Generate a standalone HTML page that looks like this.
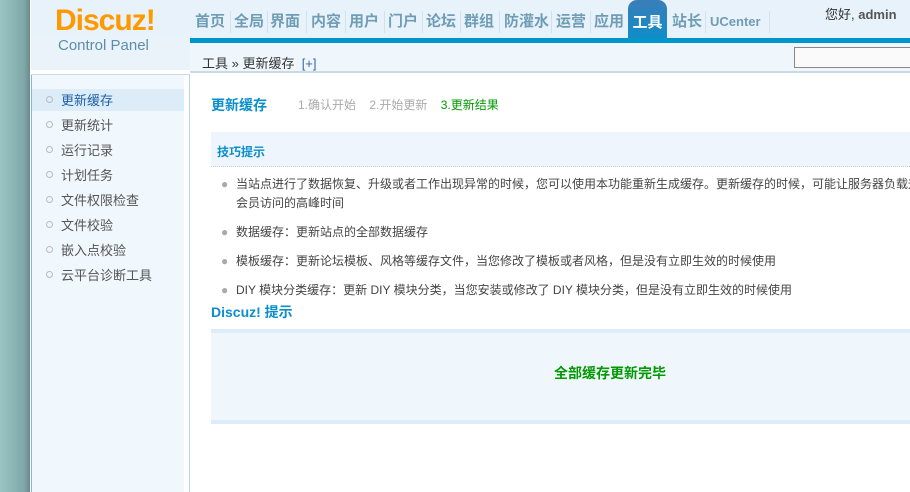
<!DOCTYPE html>
<html><head><meta charset="utf-8">
<style>
*{margin:0;padding:0;box-sizing:border-box}
body{width:910px;height:492px;overflow:hidden;position:relative;background:#fff;font-family:"Liberation Sans","Noto Sans CJK SC",sans-serif;font-size:12px;color:#333}
.a{position:absolute}
.desk{left:0;top:0;width:30px;height:492px;background:linear-gradient(90deg,#9cc4c4,#7fa8a8 80%,#6a8a8a)}
.hdr{left:31px;top:0;width:879px;height:38px;background:#e8f2fa}
.logo{left:55px;top:4px;font:bold 30px "Liberation Sans",sans-serif;color:#ff9900;letter-spacing:-1px}
.cp{left:58px;top:37px;font-size:15px;color:#5b8fa8}
.bar{left:190px;top:38px;width:720px;height:5px;background:#0096cc}
.bc{left:190px;top:43px;width:720px;height:30px;background:#f0f7fc;border-bottom:2px solid #c9dbe6}
.n{position:absolute;top:11px;font-weight:bold;font-size:15px;color:#6f9db5;white-space:nowrap;line-height:22px}
.d{position:absolute;top:11px;width:1px;height:22px;background:#d0e2ee}
.tab{left:628px;top:0;width:39px;height:43px;background:linear-gradient(#3a7db8,#0a8fcb);border-radius:9px 9px 0 0;color:#fff;font-weight:bold;font-size:15px;text-align:center;padding-top:11px}
.side{left:31px;top:38px;width:153px;height:454px;background:#f0f7fd;border-left:1px solid #8ab4d8}
.sep{left:184px;top:75px;width:6px;height:417px;background:#fff;border-right:1px solid #b8d4e2}
.si{left:46px;font-size:13px;color:#555;height:22px;line-height:22px}
.si i{display:inline-block;width:7px;height:7px;border:1px solid #bbb;border-radius:50%;margin-right:8px;vertical-align:2px}
</style></head><body>
<div class="a desk"></div>
<div class="a side"></div>
<div class="a hdr"></div>
<div class="a" style="left:31px;top:38px;width:159px;height:32px;background:#eaf3fa"></div>
<div class="a" style="left:31px;top:70px;width:159px;height:5px;background:#fff;border-bottom:1px solid #c9dbe6"></div>
<div class="a logo">Discuz!</div>
<div class="a cp">Control Panel</div>
<div class="n" style="left:195px">首页</div><div class="d" style="left:230px"></div>
<div class="n" style="left:234px">全局</div><div class="d" style="left:267px"></div>
<div class="n" style="left:270px">界面</div><div class="d" style="left:306px"></div>
<div class="n" style="left:311px">内容</div><div class="d" style="left:345px"></div>
<div class="n" style="left:349px">用户</div><div class="d" style="left:384px"></div>
<div class="n" style="left:388px">门户</div><div class="d" style="left:422px"></div>
<div class="n" style="left:426px">论坛</div><div class="d" style="left:460px"></div>
<div class="n" style="left:464px">群组</div><div class="d" style="left:499px"></div>
<div class="n" style="left:504px">防灌水</div><div class="d" style="left:551px"></div>
<div class="n" style="left:556px">运营</div><div class="d" style="left:590px"></div>
<div class="n" style="left:594px">应用</div>
<div class="n" style="left:672px">站长</div><div class="d" style="left:705px"></div>
<div class="n" style="left:710px;font-size:13px">UCenter</div><div class="d" style="left:769px"></div>
<div class="a tab">工具</div>
<div class="a" style="left:825px;top:4px;font-size:13px;color:#333">您好, <b style="color:#555">admin</b></div>
<div class="a bar"></div>
<div class="a bc"></div>
<div class="a" style="left:202px;top:53px;font-size:13px;color:#333">工具 » 更新缓存 &nbsp;<span style="color:#3366aa">[+]</span></div>
<div class="a" style="left:794px;top:47px;width:120px;height:21px;border:1px solid #888;border-right:0;background:#fafafa"></div>
<div class="a" style="left:32px;top:89px;width:152px;height:22px;background:#dcecf8"></div>
<div class="a si" style="top:90px;color:#1f5fa6"><i></i>更新缓存</div>
<div class="a si" style="top:115px"><i></i>更新统计</div>
<div class="a si" style="top:140px"><i></i>运行记录</div>
<div class="a si" style="top:165px"><i></i>计划任务</div>
<div class="a si" style="top:190px"><i></i>文件权限检查</div>
<div class="a si" style="top:215px"><i></i>文件校验</div>
<div class="a si" style="top:240px"><i></i>嵌入点校验</div>
<div class="a si" style="top:265px"><i></i>云平台诊断工具</div>
<div class="a sep"></div>
<div class="a" style="left:211px;top:95px;font-size:14px;font-weight:bold;color:#0a8fcb">更新缓存</div>
<div class="a" style="left:298px;top:96px;font-size:12px;color:#aaa">1.确认开始 &nbsp;&nbsp;&nbsp;2.开始更新 &nbsp;&nbsp;&nbsp;<span style="color:#090">3.更新结果</span></div>
<div class="a" style="left:211px;top:132px;width:699px;height:35px;background:#eef5fc;border-bottom:1px dotted #ccc"></div>
<div class="a" style="left:217px;top:143px;font-weight:bold;font-size:12px;color:#0a8fcb">技巧提示</div>
<div class="a" style="left:221px;top:175px;width:689px;overflow:hidden;font-size:12px;line-height:19px;color:#444;white-space:nowrap">
<div style="position:relative;padding-left:15px">
<div><span style="position:absolute;left:0;color:#aaa">●</span>当站点进行了数据恢复、升级或者工作出现异常的时候，您可以使用本功能重新生成缓存。更新缓存的时候，可能让服务器负载升高，请尽量避开</div>
<div>会员访问的高峰时间</div>
<div style="margin-top:10px;position:relative"><span style="position:absolute;left:-15px;color:#aaa">●</span>数据缓存：更新站点的全部数据缓存</div>
<div style="margin-top:10px;position:relative"><span style="position:absolute;left:-15px;color:#aaa">●</span>模板缓存：更新论坛模板、风格等缓存文件，当您修改了模板或者风格，但是没有立即生效的时候使用</div>
<div style="margin-top:10px;position:relative"><span style="position:absolute;left:-15px;color:#aaa">●</span>DIY 模块分类缓存：更新 DIY 模块分类，当您安装或修改了 DIY 模块分类，但是没有立即生效的时候使用</div>
</div></div>
<div class="a" style="left:211px;top:302px;font-size:14px;font-weight:bold;color:#0a8fcb">Discuz! 提示</div>
<div class="a" style="left:211px;top:329px;width:699px;height:95px;background:#f0f7fc;border-top:4px solid #dcecf8;border-bottom:4px solid #dcecf8"></div>
<div class="a" style="left:554px;top:363px;font-size:14px;font-weight:bold;color:#090">全部缓存更新完毕</div>
</body></html>
